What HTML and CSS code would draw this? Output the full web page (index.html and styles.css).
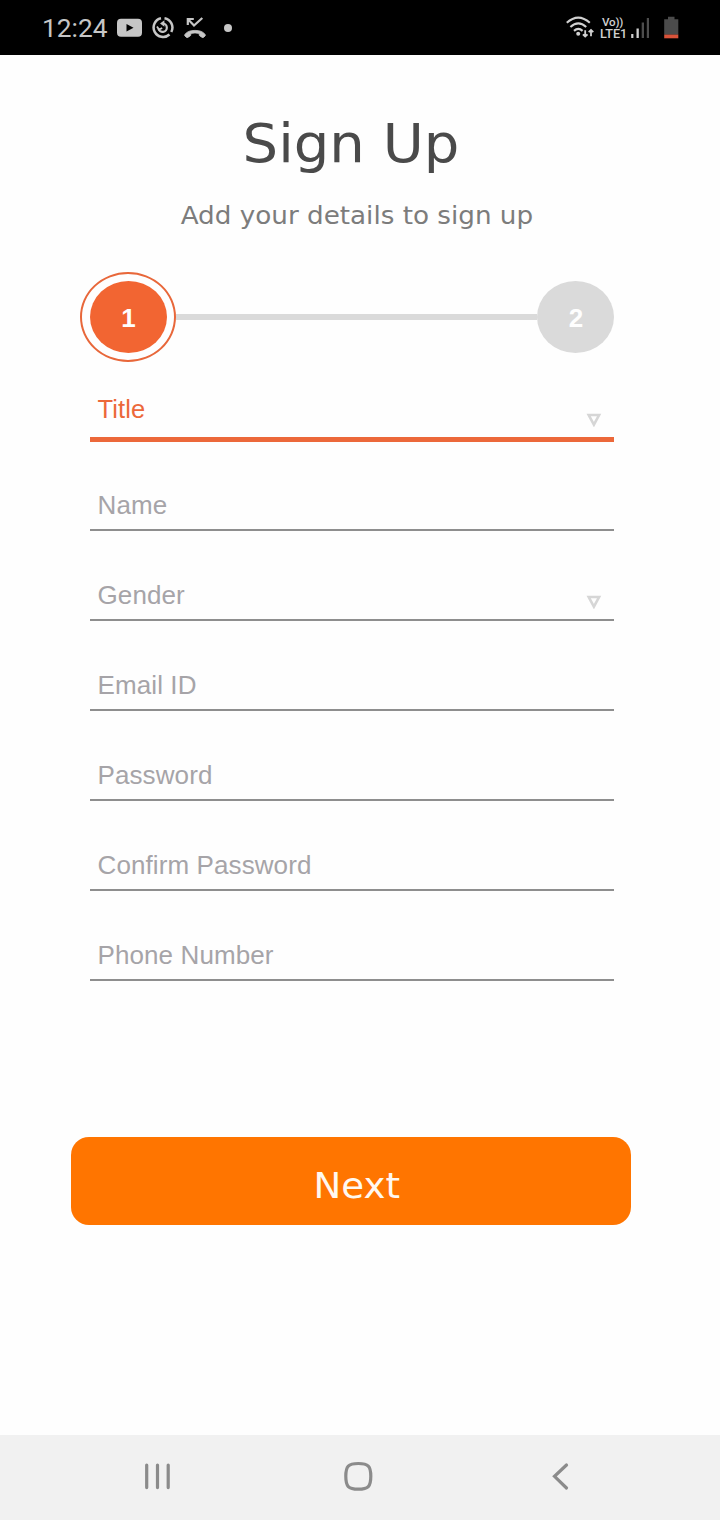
FILE: index.html
```html
<!DOCTYPE html>
<html lang="en">
<head>
<meta charset="utf-8">
<title>Sign Up</title>
<link rel="stylesheet" href="styles.css">
</head>
<body>
<div class="screen">
  <header class="status">
    <span class="time">12:24</span>
    <div class="notifications">
      <svg width="26" height="22" viewBox="0 0 26 22"><rect x="1" y="1.800" width="25" height="18" rx="4" fill="#c6c6c6"/><path d="M10.500 7 17.500 10.800 10.500 14.600z" fill="#000"/></svg>
      <svg width="22" height="22" viewBox="0 0 22 22" fill="none" stroke="#c6c6c6" stroke-width="2.5"><path d="M9 1.200A9.500 9.500 0 1 0 17.500 17.500M19.300 15A9.500 9.500 0 0 0 12.500 1.200"/><path d="M10.500 6.500A4.200 4.200 0 1 1 6.500 11.500" stroke-width="2.200"/><path d="M12.400 3.200 8 6.600 12.400 9.800z" fill="#c6c6c6" stroke="none"/><path d="M5 9.500l2 3 3.200-1.500" stroke-width="1.800"/></svg>
      <svg width="22" height="22" viewBox="0 0 22 22" fill="none" stroke="#c6c6c6"><path d="M3.800 8V2h6M4 2.200l6 6.300 8.300-7.500" stroke-width="2.2"/><path d="M.7 17.800C2.500 14.700 6 13.400 11 13.400S19.500 14.700 21.300 17.800q.3.600-.2 1.100l-1.400 1.400q-.7.600-1.500.1l-2.400-1.500q-.6-.4-.6-1.200v-1.300q-4.200-1-8.400 0v1.300q0 .8-.6 1.200l-2.400 1.500q-.8.500-1.500-.1L.9 18.900q-.5-.5-.2-1.100z" fill="#c6c6c6" stroke-width=".8"/></svg>
      <span class="dot"></span>
    </div>
    <div class="signals">
      <svg width="29" height="24" viewBox="0 0 29 24" fill="none" stroke="#d0d0d0" stroke-width="2.1"><path d="M.8 6.800Q12.200-3.600 23.800 6.800M4.400 11q7.900-7.200 15.800 0M8 14.900q4.300-3.900 8.600 0"/><circle cx="12.200" cy="17.800" r="2" fill="#d0d0d0" stroke="none"/><path d="M19.200 14.300v6.200M16.900 18.300l2.300 2.300 2.300-2.300M25 20.300v-6.200M22.700 16.200l2.300-2.300 2.300 2.300" stroke-width="1.8"/></svg>
      <div class="volte"><span>Vo))</span><span>LTE1</span></div>
      <svg width="19" height="22" viewBox="0 0 19 22"><path fill="#d0d0d0" d="M.2 17h2.200v4H.2zM5.500 11.500h2.300V21H5.500z"/><path fill="#4d4d4d" d="M10.700 5.500H13V21h-2.300zM15.800 1H18v20h-2.200z"/></svg>
      <svg class="battery" width="15" height="23" viewBox="0 0 15 23"><path fill="#4b4b4b" d="M4 .7h6.500v2.500h3.800v15.600H.2V3.200H4z"/><path fill="#d9533a" d="M.2 18.600h14.100v3.700H.2z"/></svg>
    </div>
  </header>

  <main class="page">
    <h1 class="title">Sign Up</h1>
    <p class="subtitle">Add your details to sign up</p>
    <div class="steps">
      <div class="ring"><div class="step step-active">1</div></div>
      <div class="track"></div>
      <div class="step">2</div>
    </div>
    <form class="form">
      <div class="field field-active"><span>Title</span><svg class="arrow" width="16" height="14" viewBox="0 0 16 14"><path d="M2.700 2h10.400L7.900 11.700z"/></svg></div>
      <div class="field"><span>Name</span></div>
      <div class="field"><span>Gender</span><svg class="arrow" width="16" height="14" viewBox="0 0 16 14"><path d="M2.700 2h10.400L7.900 11.700z"/></svg></div>
      <div class="field"><span>Email ID</span></div>
      <div class="field"><span>Password</span></div>
      <div class="field"><span>Confirm Password</span></div>
      <div class="field"><span>Phone Number</span></div>
    </form>
    <button class="next" type="button"><span>Next</span></button>
  </main>

  <nav class="navbar">
    <svg width="28" height="30" viewBox="0 0 28 30"><path d="M2.700 4v22.600M13.500 4v22.600M24.200 4v22.600"/></svg>
    <svg width="32" height="32" viewBox="0 0 32 32"><path d="M15.300 3.500C25.300 3.500 27.800 6 27.800 16.300S25.300 29.200 15.300 29.200 2.800 26.500 2.800 16.300 5.300 3.500 15.300 3.500z"/></svg>
    <svg width="20" height="30" viewBox="0 0 20 30"><path d="M14.500 4 2.500 15.300 14.500 27"/></svg>
  </nav>
</div>
</body>
</html>
```
FILE: styles.css
```css
* { box-sizing: border-box; }
body { margin: 0; background: #fefefe; }
svg { display: block; flex: none; }
.screen {
  width: 720px;
  height: 1520px;
  display: flex;
  flex-direction: column;
  font-family: "Liberation Sans", Arial, sans-serif;
}
.status {
  height: 55px;
  background: #000;
  display: flex;
  align-items: center;
  padding: 0 41px 0 42px;
  color: #c6c6c6;
}
.time {
  width: 74px;
  font: 26.3px/30px Roboto, sans-serif;
}
.notifications { display: flex; align-items: center; gap: 10px; }
.dot {
  width: 8px;
  height: 8px;
  margin-left: 8px;
  border-radius: 50%;
  background: #c6c6c6;
}
.signals {
  margin-left: auto;
  display: flex;
  align-items: center;
  color: #d0d0d0;
}
.volte {
  width: 31px;
  margin-left: 5px;
  display: grid;
  grid-template-rows: 12px 12px;
  font: 500 12.6px/12px Roboto, sans-serif;
}
.volte span:first-child { font-size: 11.6px; padding-left: 2px; letter-spacing: -.2px; }
.battery { margin-left: 14px; }

.page {
  flex: 1;
  display: flex;
  flex-direction: column;
  padding: 54px 89px 0 71px;
}
.title, .subtitle, .next {
  font-family: "DejaVu Sans", sans-serif;
  font-weight: 400;
  text-align: center;
}
.title {
  margin: 0;
  font-size: 53px;
  line-height: 70px;
  color: #4a4a4a;
  transform: scaleX(1.058);
}
.subtitle {
  margin: 22px 0 0;
  font-size: 24.5px;
  line-height: 30px;
  color: #7c7c7c;
  padding-left: 11px;
  transform: scaleX(1.07);
}
.steps {
  display: flex;
  align-items: center;
  margin: 41px 17px 0 9px;
}
.ring {
  width: 96px;
  height: 90px;
  border: 2px solid #e8673a;
  border-radius: 50%;
  display: flex;
  align-items: center;
  justify-content: center;
}
.step {
  width: 77px;
  height: 72px;
  padding-left: 1px;
  border-radius: 50%;
  background: #dadada;
  color: #fefefe;
  font-size: 26px;
  font-weight: 700;
  line-height: 74px;
  text-align: center;
}
.step-active { background: #f26532; }
.track { flex: 1; height: 6px; background: #dadada; }

.form { margin: 18px 17px 0 19px; }
.field {
  height: 90px;
  display: flex;
  align-items: flex-end;
  justify-content: space-between;
  padding: 0 12px 9px 7.5px;
  border-bottom: 2px solid #8e8e8e;
  color: #a6a4a8;
  font-size: 26px;
  line-height: 30px;
  letter-spacing: .1px;
}
.field-active {
  height: 62px;
  padding-bottom: 13px;
  border-bottom: 5px solid #ec683a;
  color: #ec683a;
  font-size: 25.5px;
}
.field-active + .field { height: 89px; }
.arrow {
  margin-bottom: 1px;
  fill: none;
  stroke: #d6d6d6;
  stroke-width: 2.6;
}
.field-active .arrow { margin-bottom: -3px; }
.next {
  margin-top: 156px;
  width: 560px;
  height: 88px;
  padding: 10px 0 0 12px;
  border: 0;
  border-radius: 18px;
  background: #ff7500;
  color: #fff8f0;
  font-size: 35px;
}
.next span { display: inline-block; transform: scaleX(1.06); }
.navbar {
  height: 85px;
  background: #f1f1f1;
  display: flex;
  align-items: center;
  gap: 171px;
  padding: 0 0 3px 144px;
}
.navbar svg:last-child { margin-left: 6px; }
.navbar svg {
  fill: none;
  stroke: #8b8b8b;
  stroke-width: 3.2;
  stroke-linecap: round;
}
```
